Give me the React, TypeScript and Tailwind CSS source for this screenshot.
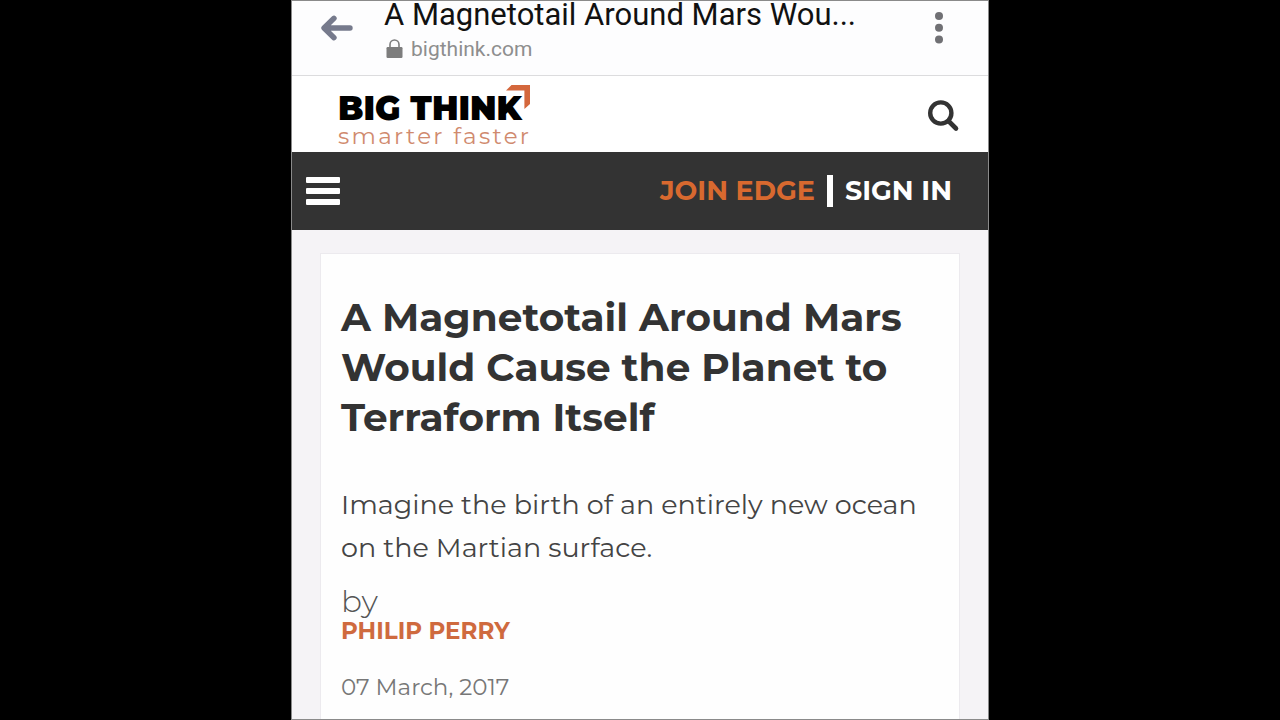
const article = {
  title: "A Magnetotail Around Mars Would Cause the Planet to Terraform Itself",
  summary: "Imagine the birth of an entirely new ocean on the Martian surface.",
  author: "Philip Perry",
  date: "07 March, 2017",
};

function BrowserBar() {
  return (
    <header className="flex h-[75px] items-start border-b border-[#dcdcde] bg-[#fdfdfe] pl-7 pr-8 font-[Roboto,sans-serif]">
      <button type="button" aria-label="Back" className="mt-2.5 h-9 w-9">
        <svg viewBox="0 0 36 36" className="h-9 w-9" fill="none" aria-hidden="true">
          <path
            d="M30 17H5M14 7.300 4 17 14 26.700"
            stroke="#767a8c"
            strokeWidth="5.400"
            strokeLinecap="round"
            strokeLinejoin="round"
          />
        </svg>
      </button>
      <div className="ml-7 min-w-0 flex-1">
        <p className="whitespace-nowrap text-[31px] leading-7 text-[#111]">
          A Magnetotail Around Mars Wou...
        </p>
        <p className="mt-2 flex items-center gap-2 pl-0.5 text-[21px] leading-6 text-[#8e8e8e]">
          <svg viewBox="0 0 17 20" className="h-5 w-[17px]" aria-hidden="true">
            <path
              d="M4 9V5.500a4.500 4.500 0 0 1 9 0V9"
              fill="none"
              stroke="#7d7d7d"
              strokeWidth="1.600"
            />
            <rect x="0.500" y="8" width="16" height="11" rx="1.200" fill="#7d7d7d" />
          </svg>
          bigthink.com
        </p>
      </div>
      <button type="button" aria-label="More options" className="mt-2.5 h-9 w-8">
        <svg viewBox="0 0 32 36" className="h-9 w-8" fill="#707074" aria-hidden="true">
          <circle cx="15" cy="5" r="4" />
          <circle cx="15" cy="16.700" r="4" />
          <circle cx="15" cy="28.400" r="4" />
        </svg>
      </button>
    </header>
  );
}

function Logo() {
  return (
    <a href="#home" className="block">
      <span className="flex items-start">
        <span className="mt-2 text-[33px] font-black leading-8 text-black">BIG THINK</span>
        <svg viewBox="0 0 24 24" className="-ml-4 mt-px h-6 w-6" aria-hidden="true">
          <path d="M0 5.500 5.500 0H24V19L18.400 24V5.500Z" fill="#d4673c" />
        </svg>
      </span>
      <span className="block text-[23px] leading-6 tracking-widest text-[#d08a6e]">
        smarter faster
      </span>
    </a>
  );
}

function SiteHeader() {
  return (
    <div className="flex h-[76px] items-start justify-between bg-white pl-[46px] pr-7 pt-2">
      <Logo />
      <button type="button" aria-label="Search" className="mt-4 h-8 w-8">
        <svg viewBox="0 0 32 32" className="h-8 w-8" fill="none" aria-hidden="true">
          <circle cx="12.800" cy="13" r="10.600" stroke="#333" strokeWidth="4.400" />
          <path d="m20.500 21 7.500 7.500" stroke="#333" strokeWidth="4.600" strokeLinecap="round" />
        </svg>
      </button>
    </div>
  );
}

function NavBar() {
  return (
    <nav className="flex h-[78px] items-center justify-between bg-[#333] pl-3.5 pr-9 text-[27px] font-bold leading-8">
      <button type="button" aria-label="Menu" className="flex w-[34px] flex-col gap-[5px]">
        <span className="h-1.5 w-full rounded-[1px] bg-white" />
        <span className="h-1.5 w-full rounded-[1px] bg-white" />
        <span className="h-1.5 w-full rounded-[1px] bg-white" />
      </button>
      <div className="flex items-center gap-3">
        <a href="#edge" className="text-[#d8692f]">
          JOIN EDGE
        </a>
        <span className="h-8 w-1.5 bg-white" />
        <a href="#sign-in" className="text-white">
          SIGN IN
        </a>
      </div>
    </nav>
  );
}

export default function App() {
  return (
    <div className="flex min-h-screen justify-center bg-black">
      <div className="flex w-full max-w-[698px] flex-col border border-[#8a8a8a] bg-[#f5f3f6] font-[Montserrat,Inter,sans-serif]">
        <BrowserBar />
        <SiteHeader />
        <NavBar />
        <main className="flex flex-1 flex-col px-7 pt-[23px]">
          <article className="flex-1 border border-b-0 border-[#eceaee] bg-[#fefefe] px-5 pt-[38px]">
            <h1 className="text-[39px] font-bold leading-[50px] text-[#333]">{article.title}</h1>
            <p className="mt-[41px] text-[27px] leading-[43px] text-[#444]">{article.summary}</p>
            <p className="mt-4 text-[31px] font-light leading-8 text-[#555]">by</p>
            <a href="#author" className="block text-[23px] font-bold uppercase leading-7 text-[#cf6a3e]">
              {article.author}
            </a>
            <time dateTime="2017-03-07" className="mt-7 block text-[23px] leading-7 text-[#777]">
              {article.date}
            </time>
          </article>
        </main>
      </div>
    </div>
  );
}
